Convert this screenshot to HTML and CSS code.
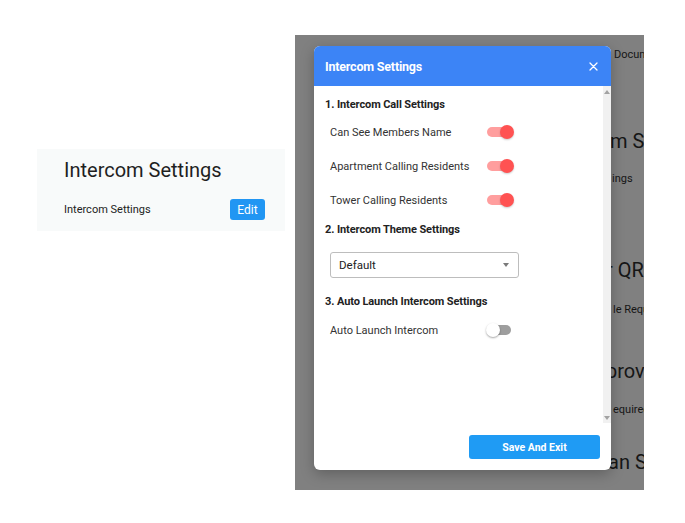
FILE: index.html
```html
<!DOCTYPE html>
<html>
<head>
<meta charset="utf-8">
<link rel="stylesheet" href="styles.css">
</head>
<body>
<div class="page">
  <section class="card">
    <h2 class="card-title">Intercom Settings</h2>
    <div class="card-row">
      <span class="card-label">Intercom Settings</span>
      <button class="edit-btn">Edit</button>
    </div>
  </section>

  <div class="panel">
    <div class="under">
      <div class="u-small u-doc">Docum</div>
      <div class="u-big u-1">m S</div>
      <div class="u-small u-2">ings</div>
      <div class="u-big u-3">r QR</div>
      <div class="u-small u-4">le Requ</div>
      <div class="u-big u-5">prov</div>
      <div class="u-small u-6">equired</div>
      <div class="u-big u-7">an S</div>
    </div>

    <div class="modal">
      <header class="modal-head">
        <span class="modal-title">Intercom Settings</span>
        <svg class="close" width="9" height="9" viewBox="0 0 9 9"><path d="M1 1L8 8M8 1L1 8" stroke="#fff" stroke-width="1.3" stroke-linecap="round"/></svg>
      </header>
      <div class="modal-body">
        <div class="content">
          <div class="sec-title s1">1. Intercom Call Settings</div>
          <div class="row r1"><span class="lbl">Can See Members Name</span><span class="tgl on"><span class="knob"></span></span></div>
          <div class="row"><span class="lbl">Apartment Calling Residents</span><span class="tgl on"><span class="knob"></span></span></div>
          <div class="row"><span class="lbl">Tower Calling Residents</span><span class="tgl on"><span class="knob"></span></span></div>
          <div class="sec-title s2">2. Intercom Theme Settings</div>
          <div class="select"><span>Default</span><span class="caret"></span></div>
          <div class="sec-title s3">3. Auto Launch Intercom Settings</div>
          <div class="row r4"><span class="lbl">Auto Launch Intercom</span><span class="tgl off"><span class="knob"></span></span></div>
        </div>
        <div class="scrollbar">
          <span class="arr up"></span>
          <span class="arr down"></span>
        </div>
      </div>
      <footer class="modal-foot">
        <button class="save-btn">Save And Exit</button>
      </footer>
    </div>
  </div>
</div>
</body>
</html>
```

FILE: styles.css
```css
* { box-sizing: border-box; }
html, body { margin: 0; padding: 0; background: #fff; }
body { font-family: Roboto, "Liberation Sans", Arial, sans-serif; color: #222; width: 685px; height: 523px; overflow: hidden; }

.page { display: flex; align-items: flex-start; }

.card {
  margin: 149px 0 0 37px;
  width: 248px;
  height: 82px;
  background: #f8fafa;
  padding: 9px 20px 0 27px;
}
.card-title { margin: 0; font-size: 20px; font-weight: 400; line-height: 24px; color: #1f1f1f; }
.card-row { display: flex; justify-content: space-between; align-items: center; margin-top: 17px; height: 21px; }
.card-label { font-size: 11px; color: #222; }
.edit-btn {
  width: 35px; height: 21px; border: 0; border-radius: 3px;
  background: #2196f3; color: #fff; font-family: inherit; font-size: 12px; padding: 0;
}

.panel {
  position: relative;
  margin: 35px 0 0 10px;
  width: 349px;
  height: 455px;
  background: #808080;
  overflow: hidden;
}
.under { display: flex; flex-direction: column; color: #161616; white-space: nowrap; }
.u-small { font-size: 11px; line-height: 14px; }
.u-big { font-size: 20px; line-height: 24px; }
.u-doc { margin: 13px 0 0 319px; }
.u-1 { margin: 67px 0 0 315px; }
.u-2 { margin: 19px 0 0 317px; }
.u-3 { margin: 72px 0 0 311px; }
.u-4 { margin: 21px 0 0 318px; }
.u-5 { margin: 42px 0 0 311px; }
.u-6 { margin: 20px 0 0 318px; }
.u-7 { margin: 33px 0 0 313px; }

.modal {
  position: absolute;
  left: 19px; top: 11px;
  width: 297px; height: 424px;
  background: #fff;
  border-radius: 6px;
  overflow: hidden;
  display: flex; flex-direction: column;
  box-shadow: 0 4px 14px rgba(0,0,0,0.25);
}
.modal-head {
  height: 40px; flex: none;
  background: #3c84f6;
  display: flex; align-items: center; justify-content: space-between;
  padding: 0 13px 0 11px;
}
.modal-title { color: #fff; font-size: 12.5px; font-weight: 700; letter-spacing: -0.2px; }
.close { display: block; }

.modal-body { height: 337px; flex: none; display: flex; }
.content { flex: 1; padding: 10px 0 0 11px; }
.scrollbar { width: 8px; background: #f1f1f1; position: relative; }
.arr { position: absolute; left: 1px; width: 0; height: 0; border-left: 3px solid transparent; border-right: 3px solid transparent; }
.arr.up { top: 4px; border-bottom: 4px solid #a3a3a3; }
.arr.down { bottom: 3px; border-top: 4px solid #a3a3a3; }

.sec-title { font-size: 11px; font-weight: 700; line-height: 16px; color: #222; letter-spacing: -0.1px; }
.s1 { margin-top: 1px; }
.s2 { margin-top: 5px; }
.s3 { margin-top: 16px; }

.row { display: flex; align-items: center; height: 34px; padding-left: 5px; }
.r1 { margin-top: 2px; }
.r4 { margin-top: 3px; }
.lbl { width: 157px; font-size: 11px; color: #333; }

.tgl { position: relative; width: 24px; height: 10px; border-radius: 5px; display: block; }
.tgl .knob { position: absolute; top: -2px; width: 14px; height: 14px; border-radius: 50%; }
.tgl.on { background: #ff9e9e; }
.tgl.on .knob { right: -3px; background: #ff5252; box-shadow: 0 1px 2px rgba(0,0,0,0.2); }
.tgl.off { background: #9e9e9e; }
.tgl.off .knob { left: -1px; background: #fff; box-shadow: 0 1px 2px rgba(0,0,0,0.35); }

.select {
  margin: 14px 0 0 5px;
  width: 189px; height: 26px;
  border: 1px solid #bdbdbd; border-radius: 3px;
  display: flex; align-items: center; justify-content: space-between;
  padding: 0 9px 0 8px;
  font-size: 11.5px; color: #222;
}
.caret { width: 0; height: 0; border-left: 3.5px solid transparent; border-right: 3.5px solid transparent; border-top: 4px solid #7a7a7a; }

.modal-foot { flex: 1; display: flex; justify-content: flex-end; padding: 12px 11px 0 0; }
.save-btn {
  width: 131px; height: 24px; border: 0; border-radius: 3px;
  background: #1f9bf4; color: #fff; font-family: inherit; font-size: 10.5px; font-weight: 700;
}
```
